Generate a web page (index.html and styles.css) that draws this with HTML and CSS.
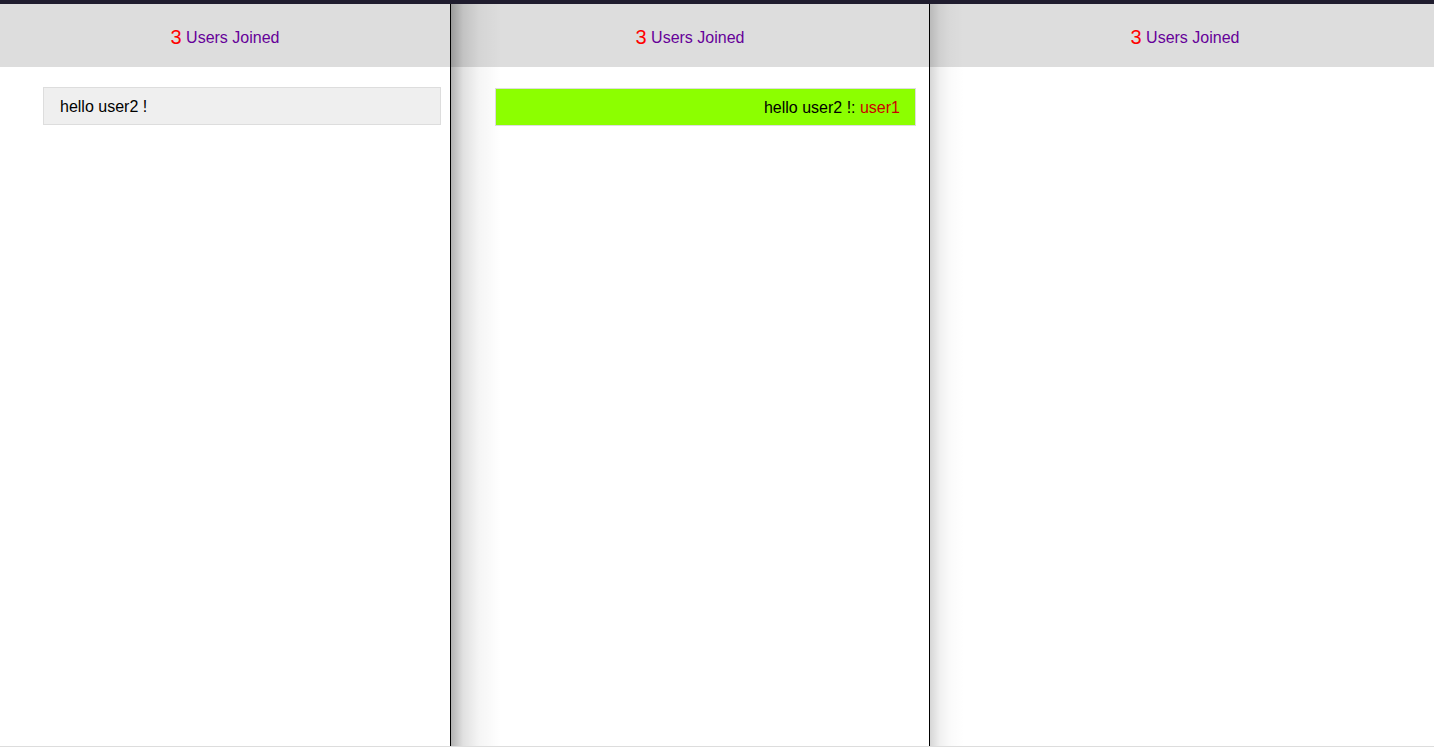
FILE: index.html
```html
<!DOCTYPE html>
<html>
<head>
<meta charset="utf-8">
<link rel="stylesheet" href="styles.css">
</head>
<body>
<div class="topbar"></div>
<div class="panes">
  <section class="pane pane-1">
    <header class="head"><span class="count">3</span> Users Joined</header>
    <ul class="msgs">
      <li class="msg msg-in">hello user2 !</li>
    </ul>
  </section>
  <div class="divider"></div>
  <section class="pane pane-2 shadowed strong">
    <header class="head"><span class="count">3</span> Users Joined</header>
    <ul class="msgs">
      <li class="msg msg-out">hello user2 !: <span class="sender">user1</span></li>
    </ul>
  </section>
  <div class="divider"></div>
  <section class="pane pane-3 shadowed light">
    <header class="head"><span class="count">3</span> Users Joined</header>
    <ul class="msgs"></ul>
  </section>
</div>
<div class="bottomline"></div>
</body>
</html>
```
FILE: styles.css
```css
html, body {
  margin: 0;
  padding: 0;
  height: 747px;
  overflow: hidden;
  background: #ffffff;
  font-family: "Liberation Sans", Arial, sans-serif;
  font-size: 16px;
  color: #000;
}
body {
  display: flex;
  flex-direction: column;
}
.topbar {
  height: 4px;
  background: #1f1c2e;
  flex: none;
}
.panes {
  flex: 1;
  display: flex;
  min-height: 0;
}
.pane {
  position: relative;
  display: flex;
  flex-direction: column;
  background: #fff;
}
.pane-1 { width: 450px; flex: none; }
.pane-2 { width: 478px; flex: none; }
.pane-3 { flex: 1; }
.divider {
  width: 1px;
  background: #000;
  flex: none;
}
.bottomline {
  height: 1px;
  background: #dddddd;
  flex: none;
}
.head {
  height: 63px;
  background: #dddddd;
  display: flex;
  align-items: center;
  justify-content: center;
  color: #660099;
  font-size: 16px;
  white-space: pre;
  padding-top: 4px;
  box-sizing: border-box;
}
.pane-3 .head { padding-left: 6px; }
.count {
  color: #ff0000;
  font-size: 20px;
}
.msgs {
  list-style: none;
  margin: 0;
  padding: 20px 0 0 0;
  display: flex;
  flex-direction: column;
}
.msg {
  height: 38px;
  box-sizing: border-box;
  border: 1px solid #dddddd;
  display: flex;
  align-items: center;
  font-size: 16px;
  padding-top: 2px;
}
.msg-in {
  background: #efefef;
  margin: 0 9px 0 43px;
  padding-left: 16px;
}
.msg-out {
  background: #8cff00;
  margin: 1px 13px 0 44px;
  justify-content: flex-end;
  padding-right: 15px;
  white-space: pre;
}
.sender {
  color: #cc0000;
}
.shadowed::before {
  content: "";
  position: absolute;
  top: 0;
  bottom: 0;
  left: 0;
  pointer-events: none;
}
.strong::before {
  width: 50px;
  background: linear-gradient(to right, rgba(0,0,0,0.30), rgba(0,0,0,0.12) 12px, rgba(0,0,0,0.04) 28px, rgba(0,0,0,0) 50px);
}
.light::before {
  width: 34px;
  background: linear-gradient(to right, rgba(0,0,0,0.16), rgba(0,0,0,0.06) 10px, rgba(0,0,0,0.02) 20px, rgba(0,0,0,0) 34px);
}
```
